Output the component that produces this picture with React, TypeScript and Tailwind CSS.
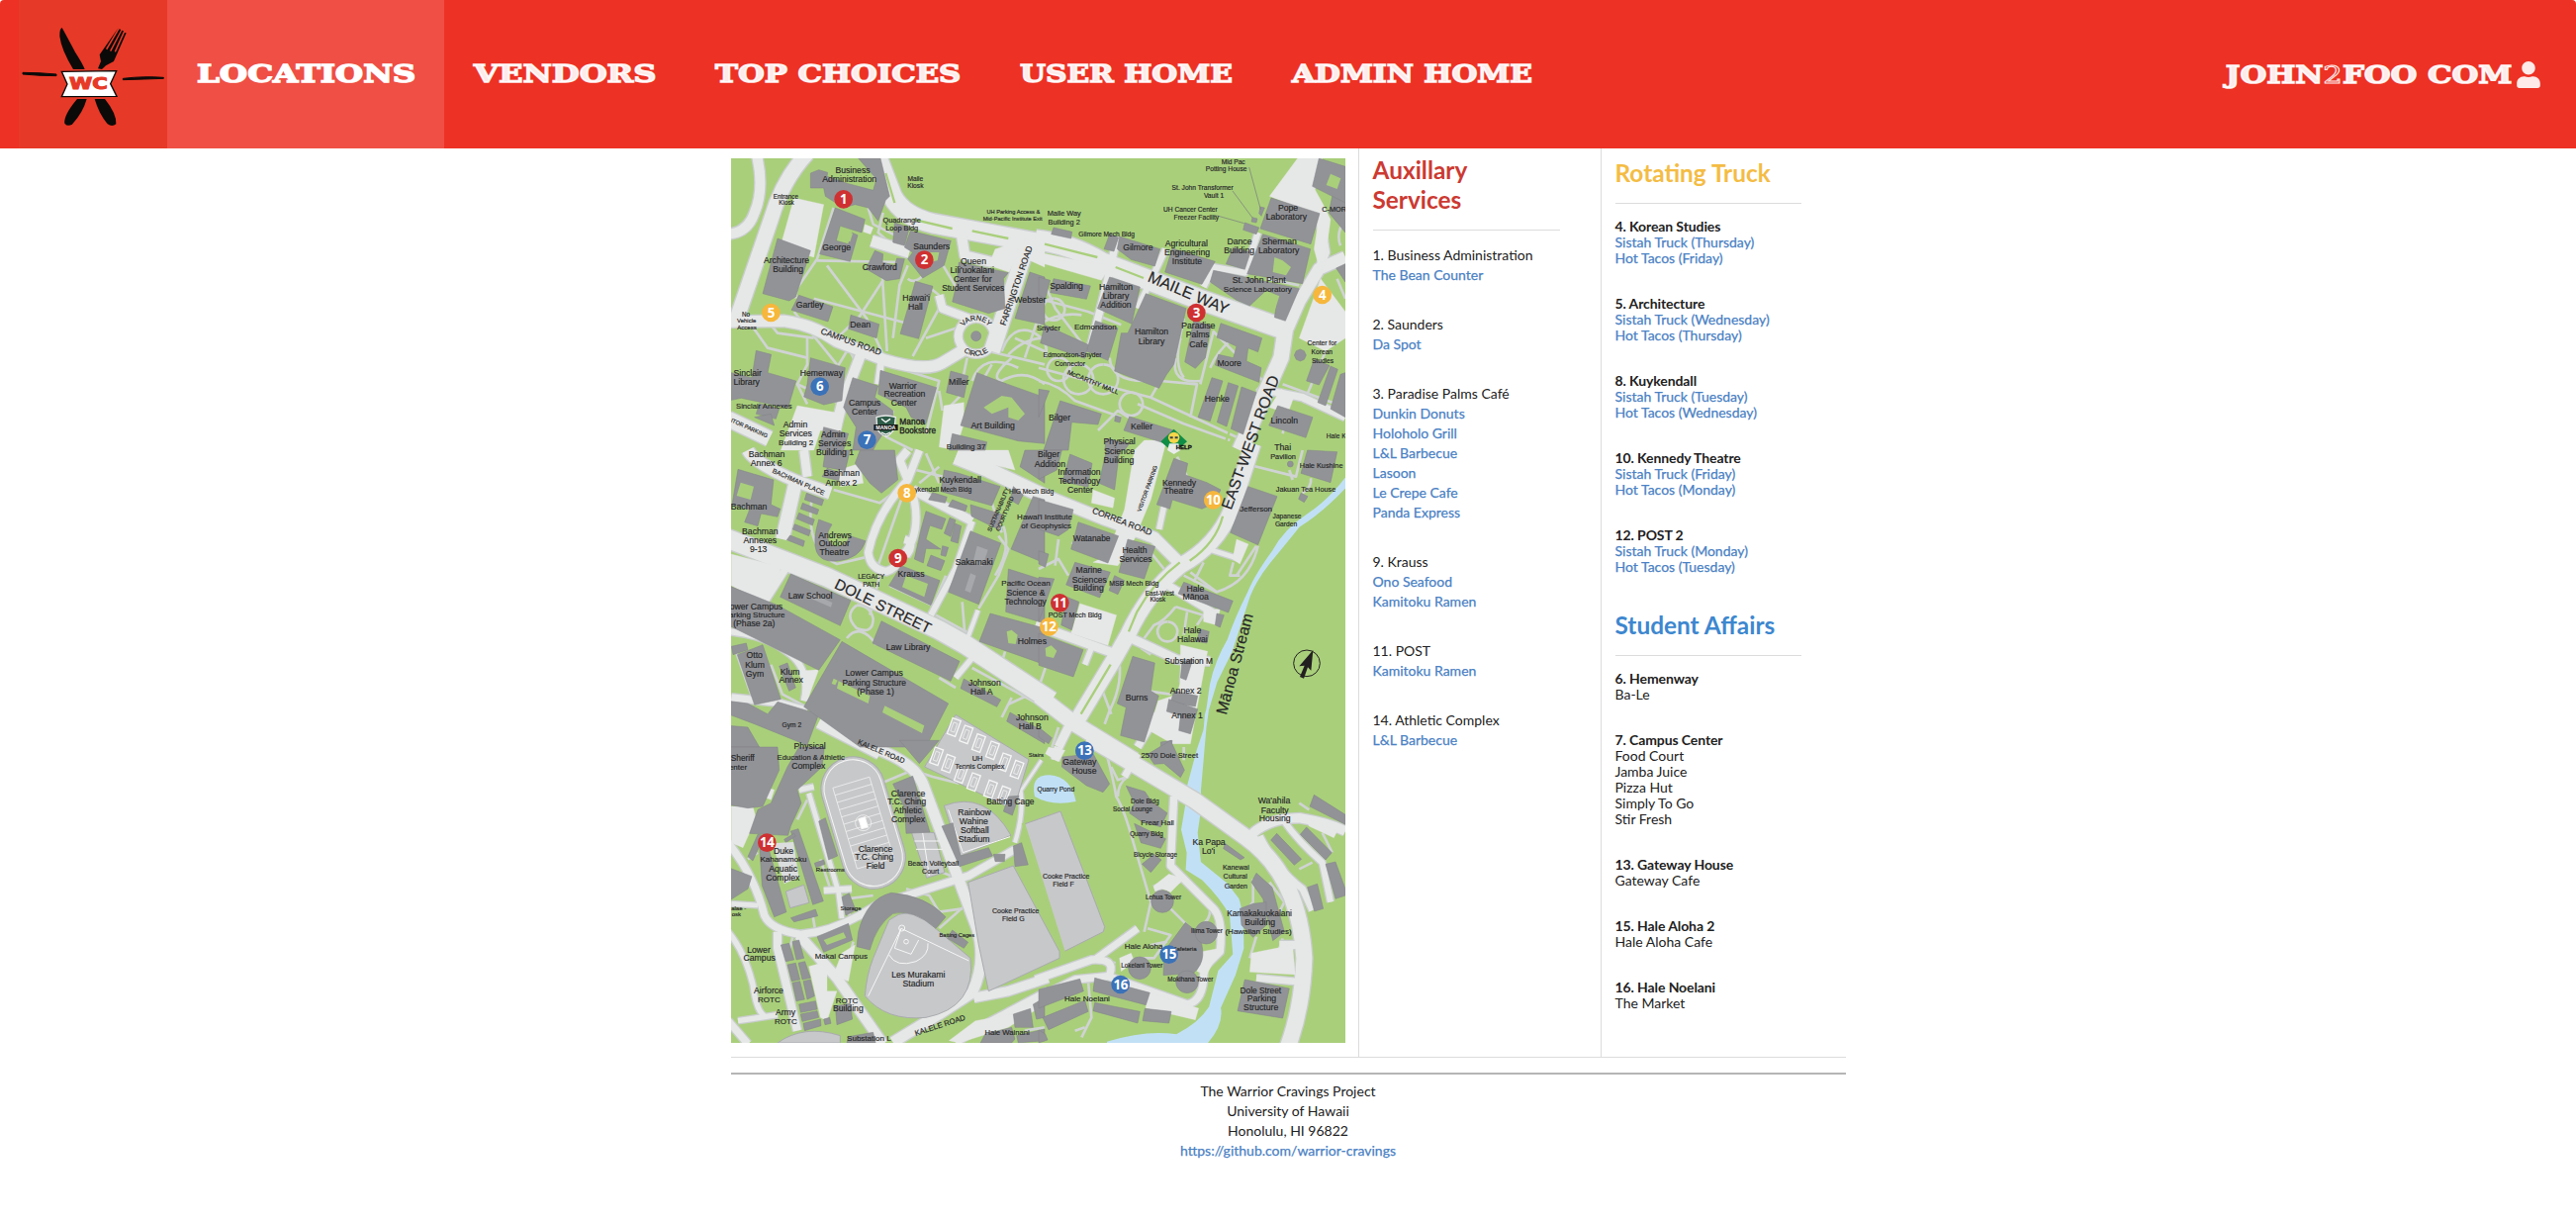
import { FaUser } from "react-icons/fa";

type Stroke = [width: number, d: string];
type Label = [x: number, y: number, text: string, size?: number, rotate?: number];

interface Tile {
  x: number;
  y: number;
  roads: Stroke[];
  lots: string[];
  paths: string[];
  buildings: string[];
  lawns?: string[];
  labels: Label[];
}

const tiles: Tile[] = [
  {
    x: 0,
    y: 0,
    roads: [
      [44, "M240 0Q165 80 130 200L20 520"],
      [30, "M88 10Q110 110 80 180Q60 240 0 245"],
      [58, "M448 0L498 130Q530 190 620 212L960 275"],
      [34, "M0 510L170 508Q260 520 330 570L470 625Q600 665 650 635L725 590"],
      [24, "M752 500a54 54 0 1 0 1 0"],
      [48, "M908 275L800 600"],
      [30, "M705 230L718 310L800 330"],
      [34, "M435 265L550 300"],
      [30, "M412 585L345 760L315 880"],
      [46, "M0 805L125 865"],
      [24, "M640 430L650 470L730 500"],
      [20, "M465 625L455 700"],
    ],
    lots: [
      "810,290 868,272 885,300 852,360 790,340",
      "200,135 290,155 260,315 158,285",
      "210,765 350,790 340,850 280,840 260,900 160,900",
      "655,765 715,755 715,820 690,900 640,890",
      "900,260 960,280 960,345 905,320",
      "415,215 440,225 432,245 410,238",
    ],
    paths: [
      "M270 325L530 330", "M195 430L270 320L320 165", "M300 340L420 500L470 610", "M470 385L398 495L330 560",
      "M468 375L482 600", "M260 440L560 520", "M545 340L520 400L500 560", "M615 410L640 430", "M600 360Q570 400 545 380",
      "M640 320L700 420", "M640 470L560 615", "M600 560L690 530", "M215 330L205 440", "M75 420L50 410",
      "M130 520L150 545L260 560", "M70 520L120 590L240 620", "M200 480L330 640", "M240 560L240 640L210 700L240 760",
      "M350 560L390 640", "M360 600L330 650", "M210 700L340 760", "M425 165L440 215L510 250", "M470 180L455 240L500 280",
      "M480 640L640 690L600 850", "M725 620L700 740L660 780", "M790 600L960 640", "M800 640L730 760", "M830 600Q860 520 920 540Q980 570 960 620",
      "M860 620Q790 680 830 690Q900 650 960 700", "M870 560L960 600", "M940 500L900 620", "M850 610Q900 560 960 560", "M740 690Q770 600 880 650",
      "M500 780L480 860L560 900", "M640 720L650 780",
    ],
    buildings: [
      "250,60 275,50 302,58 300,70 365,92 440,112 450,78 395,15 462,15 490,130 478,142 455,205 425,165 385,155 350,165 295,130 290,105 250,105",
      "325,165 415,200 405,240 340,220 328,265 365,275 375,240 393,248 370,328 278,305",
      "150,258 250,295 205,435 185,447 105,425",
      "215,430 318,465 303,510 192,475",
      "372,490 428,508 458,518 450,560 365,532",
      "445,295 470,305 468,330 505,340 512,318 535,320 520,380 480,386 418,350",
      "505,210 550,225 535,280 500,270",
      "553,235 676,265 655,340 590,378 545,320 560,300 535,285",
      "568,388 621,403 600,480 578,562 522,547 545,470",
      "700,330 850,362 835,380 840,470 790,485 680,450 692,400",
      "915,360 960,375 960,520 870,500",
      "85,598 131,610 120,665 206,690 182,772 40,742 10,748 10,665 72,680",
      "250,620 355,650 345,750 290,762 230,738 240,700",
      "95,758 155,775 145,805 85,790",
      "378,680 455,705 445,740 500,780 500,805 450,880 440,900 378,900 388,830 350,770",
      "462,658 632,710 600,820 555,800 540,770 455,730",
      "675,660 728,675 715,740 662,725",
      "755,665 820,690 960,740 960,880 880,872 705,825",
      "680,850 785,875 780,900 670,900",
      "290,830 365,850 350,900 275,900",
      "130,790 80,800 140,825",
    ],
    lawns: ["348,232 378,242 370,268 340,258", "610,300 640,300 635,325 612,330", "775,770 830,735 860,740 900,790 880,810 850,800 850,770 800,790"],
    labels: [
      [378, 60, "Business"], [368, 88, "Administration"], [568, 84, "Maile", 20], [568, 105, "Kiosk", 20],
      [175, 137, "Entrance", 19], [177, 157, "Kiosk", 19], [865, 182, "UH Parking Access &", 17], [863, 205, "Mid-Pacific Institute Exit", 17],
      [527, 210, "Quadrangle", 22], [527, 233, "Loop Bldg", 22], [329, 294, "George"], [617, 291, "Saunders"], [460, 354, "Crawford"],
      [177, 333, "Architecture"], [182, 359, "Building"], [744, 336, "Queen"], [740, 362, "Lili'uokalani"], [742, 389, "Center for"], [743, 417, "Student Services", 25],
      [248, 468, "Gartley"], [401, 527, "Dean"], [570, 448, "Hawai'i"], [568, 474, "Hall"], [916, 454, "Webster"], [54, 495, "No", 19], [56, 514, "Vehicle", 18], [57, 533, "Access", 18],
      [370, 579, "CAMPUS ROAD", 26, 20], [882, 404, "FARRINGTON ROAD", 26, -71],
      [59, 676, "Sinclair"], [56, 703, "Library"], [283, 676, "Hemenway"], [109, 774, "Sinclair Annexes", 23], [62, 838, "ITOR PARKING", 17, 24],
      [414, 765, "Campus"], [414, 791, "Center"], [530, 713, "Warrior"], [535, 739, "Recreation"], [533, 766, "Center"], [700, 703, "Miller"],
      [204, 832, "Admin"], [205, 858, "Services"], [206, 886, "Building 2", 24], [319, 860, "Admin"], [323, 888, "Services"], [324, 914, "Building 1"], [803, 834, "Art Building"], [722, 896, "Building 37", 24],
    ],
  },
  {
    x: 942,
    y: 0,
    roads: [
      [60, "M-10 262Q100 275 190 330L480 440L750 535"],
      [46, "M750 520L735 620L610 900"],
      [36, "M755 530L790 450L850 350L930 315"],
      [18, "M500 405L530 345L625 362L665 240"],
      [22, "M238 252L205 400L158 585"],
      [18, "M385 290L300 470"],
      [24, "M850 350L870 300L850 180"],
      [22, "M700 720L800 740L930 800"],
    ],
    lots: [
      "785,15 860,15 838,110 860,150 885,200 868,330 850,345 835,290 850,190 700,130",
      "855,380 930,480 930,560 870,600 790,560",
      "0,300 215,345 190,385 0,330",
      "735,715 775,735 755,790 700,770",
    ],
    paths: [
      "M0 440L150 480L250 520", "M20 400L50 470L150 600", "M45 440a33 33 0 1 0 1 0", "M0 520Q60 480 130 490", "M60 620a35 35 0 1 0 1 0",
      "M120 640a45 45 0 1 0 1 0", "M195 640a45 45 0 1 0 1 0", "M280 725a35 35 0 1 0 1 0", "M0 650L340 740L600 860", "M340 740L380 670L420 600L440 500",
      "M370 690L480 700L460 800", "M300 760L440 820L580 870", "M415 620Q400 700 490 690", "M430 560Q410 640 440 680", "M490 700L530 540L680 690",
      "M590 560Q540 600 520 650", "M720 560L730 640L660 720", "M740 700L930 770", "M870 600L810 740", "M905 380L930 440", "M0 690Q60 700 110 750L250 800",
      "M215 620Q220 690 320 690", "M380 400L500 420", "M620 470L760 520", "M790 400L690 380", "M180 840L240 780L320 830", "M760 750L740 850", "M870 480L830 560", "M910 500L870 600", "M930 200Q900 240 915 280",
    ],
    buildings: [
      "850,15 930,40 930,150 830,100", "890,130 930,150 930,240 880,180", "705,135 852,182 825,275 672,228", "672,162 685,165 675,190 668,182",
      "625,210 668,225 660,245 620,232", "648,194 663,198 660,210 645,207", "680,245 824,290 800,395 632,365", "590,285 642,300 625,352 568,335",
      "405,288 535,328 495,397 383,360", "245,252 368,290 352,342 280,322 238,290", "215,245 242,255 228,297 198,290", "45,225 101,238 98,258 38,245",
      "530,355 790,410 748,508 715,497 725,430 690,415 640,462 600,445 520,390", "45,380 157,402 145,442 35,422", "0,375 35,385 20,440 0,430",
      "215,375 307,405 282,517 178,470", "325,425 447,470 410,640 387,672 365,712 230,660 250,545 270,545", "172,508 240,530 210,628 145,600",
      "18,520 150,580 140,622 5,575", "470,508 522,522 505,620 475,652 443,632", "552,515 677,560 665,602 635,590 630,630 675,650 668,694 535,642 545,610 590,620 600,585 540,558",
      "525,680 558,690 520,812 483,800", "575,695 605,705 570,828 541,815", "615,708 660,725 620,852 583,835", "835,625 882,643 850,702 812,690",
      "725,765 831,800 810,862 698,825", "885,645 907,655 870,765 846,755", "915,670 930,665 930,800 885,775", "902,348 930,335 930,390",
      "0,715 32,720 0,800", "65,750 190,790 180,822 100,815 90,900 15,900", "275,798 410,840 385,880 258,840", "205,865 275,880 260,900 200,900",
      "233,795 250,800 246,816 230,812", "775,612 781,599 793,594 805,599 811,612 805,625 793,630 781,625",
    ],
    lawns: ["885,62 916,76 905,108 872,96", "700,425 730,432 715,480 680,470", "715,315 740,325 765,345 750,370 710,360"],
    labels: [
      [590, 33, "Mid Pac", 20], [569, 54, "Potting House", 20], [497, 111, "St. John Transformer", 20], [531, 134, "Vault 1", 20], [460, 178, "UH Cancer Center", 20], [478, 201, "Freezer Facility", 20],
      [756, 173, "Pope"], [751, 202, "Laboratory"], [896, 178, "C-MOR", 22], [77, 190, "Maile Way", 22], [77, 215, "Building 2", 22], [206, 251, "Gilmore Mech Bldg", 20], [301, 295, "Gilmore"],
      [448, 281, "Agricultural"], [450, 309, "Engineering"], [450, 335, "Institute"], [609, 275, "Dance"], [608, 302, "Building"], [730, 276, "Sherman"], [728, 304, "Laboratory"],
      [668, 393, "St. John Plant"], [664, 421, "Science Laboratory", 24], [84, 412, "Spalding"], [234, 414, "Hamilton"], [234, 442, "Library"], [234, 468, "Addition"],
      [448, 438, "MAILE WAY", 48, 23], [484, 531, "Paradise"], [482, 558, "Palms"], [484, 587, "Cafe"], [342, 549, "Hamilton"], [342, 578, "Library"], [30, 538, "Snyder", 23], [172, 535, "Edmondson", 24],
      [102, 618, "Edmondson-Snyder", 20], [95, 644, "Connector", 20], [162, 700, "McCARTHY MALL", 20, 22], [578, 645, "Moore"], [541, 754, "Henke"], [859, 583, "Center for", 20], [859, 610, "Korean", 20], [861, 637, "Studies", 20],
      [745, 818, "Lincoln"], [63, 809, "Bilger"], [312, 838, "Keller"], [245, 883, "Physical"], [902, 864, "Hale K", 20], [740, 899, "Thai"],
      [657, 882, "EAST-WEST ROAD", 48, -70],
    ],
  },
  {
    x: 0,
    y: 900,
    roads: [
      [56, "M-10 265L300 385L640 545L720 590L980 760"],
      [22, "M580 0L545 90Q450 190 425 310Q430 360 480 368Q510 360 530 320Q590 250 560 130"],
      [26, "M560 120L740 215"],
      [22, "M535 270Q570 280 540 320"],
      [18, "M740 215L690 360L615 500"],
      [12, "M758 485L715 600"],
      [36, "M60 0Q80 40 210 95L310 130"],
      [40, "M205 95L165 270"],
      [22, "M180 350L110 460"],
      [18, "M0 550Q120 560 190 620Q250 670 230 760"],
      [22, "M10 750L150 765L240 790"],
      [34, "M275 825L460 920"],
      [44, "M690 20L790 60L980 150"],
      [24, "M545 0L520 30L545 90"],
      [16, "M740 630L690 690"],
      [26, "M230 0L240 80"],
    ],
    lots: ["10,315 160,355 140,430 100,460 10,410", "700,0 850,0 870,60 700,20", "335,60 400,40 410,100 340,110", "215,670 275,665 240,760"],
    paths: [
      "M255 140Q230 300 330 345L415 325", "M320 120L460 160L540 100", "M525 150L455 350", "M600 10L640 100", "M570 60L650 80", "M640 50L580 100",
      "M490 410L620 470", "M660 380L610 500", "M710 460L720 580", "M630 500L740 560", "M820 260L850 300L820 380L760 480", "M835 230Q860 300 810 380",
      "M790 130L830 250", "M840 610L820 680", "M640 690L690 720", "M860 750L830 810", "M960 720L850 770", "M740 660L960 780", "M130 650L165 740L240 780", "M20 600L80 770", "M390 470Q350 500 390 540Q440 560 440 510Q430 470 390 470",
      "M360 570Q400 520 450 590", "M460 380L430 500",
    ],
    buildings: [
      "400,0 505,0 515,90 465,130 430,100 385,40", "295,0 370,0 355,62 288,50", "300,55 340,68 335,92 285,80",
      "30,58 138,90 130,165 158,178 150,202 100,192 90,230 50,218 65,180 12,165", "238,130 290,150 284,168 232,150", "226,160 275,180 270,195 220,178",
      "215,190 262,210 256,228 208,208", "202,224 250,243 245,260 196,240", "188,258 232,275 228,292 178,272",
      "525,350 642,395 615,470 488,410", "655,60 700,70 825,110 800,168 645,125", "620,128 664,142 658,160 608,150", "680,150 725,168 720,185 668,170",
      "735,165 832,195 820,240 738,200", "600,185 660,208 648,240 612,228 600,270 645,300 600,298 592,342 565,330 585,240",
      "615,318 657,335 645,365 603,350", "672,205 690,212 675,262 655,252", "688,222 707,230 697,282 675,275", "735,245 827,282 760,467 668,430",
      "925,140 960,150 960,342 858,300", "190,375 372,455 340,532 158,445", "0,410 150,470 340,575 275,667 0,530", "28,620 105,590 160,755 80,772",
      "155,655 180,645 205,720 185,730", "10,595 55,585 60,605 15,620", "0,760 60,768 120,800 150,763 275,800 240,895 80,830 0,800", "0,835 60,840 95,900 0,900",
      "465,518 702,640 675,700 438,585", "345,580 668,768 600,900 400,900 230,778", "850,360 960,395 960,525 842,490", "795,495 960,540 960,650 762,580",
      "715,693 827,757 815,778 705,722", "855,795 960,855 960,890 845,822", "900,0 960,0 960,100 885,50", "865,110 895,135 880,165 855,150",
      "650,290 668,295 660,322 645,318",
    ],
    lawns: [
      "38,98 78,110 68,150 26,138", "540,380 606,405 595,445 528,415", "335,700 430,745 425,768 330,722", "475,775 595,835 588,858 468,795",
      "845,550 860,545 878,560 872,588 850,585", "320,692 332,698 325,712 314,708",
    ],
    labels: [
      [117, 22, "Bachman"], [116, 48, "Annex 6"], [344, 78, "Bachman"], [343, 107, "Annex 2"], [211, 102, "BACHMAN PLACE", 20, 24], [63, 180, "Bachman"],
      [97, 256, "Bachman"], [97, 282, "Annexes"], [92, 308, "9-13"], [324, 266, "Andrews"], [322, 291, "Outdoor"], [322, 319, "Theatre"], [704, 99, "Kuykendall"], [652, 125, "ykendall Mech Bldg", 20],
      [920, 132, "HIG Mech Bldg", 20], [825, 182, "SUSTAINABILITY", 18, -67], [845, 195, "COURTYARD", 18, -67], [960, 209, "Hawai'i Institute", 24], [965, 236, "of Geophysics", 24], [746, 349, "Sakamaki"],
      [555, 384, "Krauss"], [434, 391, "LEGACY", 20], [434, 415, "PATH", 20], [903, 412, "Pacific Ocean", 24], [903, 440, "Science &"], [902, 468, "Technology", 25], [463, 487, "DOLE STREET", 46, 26],
      [249, 449, "Law School"], [78, 482, "Lower Campus"], [80, 508, "Parking Structure", 24], [79, 535, "(Phase 2a)"], [80, 631, "Otto"], [81, 659, "Klum"], [81, 686, "Gym"], [188, 681, "Klum"], [191, 706, "Annex"],
      [546, 606, "Law Library"], [443, 685, "Lower Campus"], [443, 713, "Parking Structure", 25], [447, 740, "(Phase 1)"], [922, 589, "Holmes"], [778, 713, "Johnson"], [769, 741, "Hall A"], [922, 818, "Johnson"], [916, 846, "Hall B"],
      [193, 839, "Gym 2", 20], [248, 907, "Physical"],
    ],
  },
  {
    x: 942,
    y: 900,
    roads: [
      [34, "M-10 125L200 210L350 265L425 340"],
      [46, "M650 -20L585 180Q540 290 430 350Q330 430 270 560L225 640L110 830"],
      [46, "M0 745L110 830L290 940"],
      [26, "M280 570L420 635L520 640"],
      [26, "M-10 530L240 620"],
      [22, "M385 405L540 500"],
      [14, "M515 300L610 330"],
      [16, "M160 600L140 650"],
      [16, "M380 170L365 240"],
      [12, "M440 650L435 700L470 740"],
      [26, "M90 840L60 900"],
      [22, "M300 900L360 800"],
    ],
    lots: [
      "320,-30 388,-30 340,150 290,270 240,350 165,340 205,320 260,180 290,0", "430,590 512,610 460,890 405,890 335,850 362,760 420,740 430,700",
      "125,465 236,500 210,592 98,555", "600,270 636,285 610,345 588,330", "500,490 550,480 540,530 500,520", "165,120 230,145 225,175 160,160",
    ],
    paths: [
      "M640 45L780 80L800 0", "M665 290Q640 400 540 430L440 380", "M500 340L470 400", "M460 370L540 430", "M590 340L580 380L610 380", "M660 290L600 380",
      "M415 475Q380 520 350 530L320 570", "M390 520a30 30 0 1 0 1 0", "M415 475L500 500L480 530", "M450 490L440 560", "M0 360L60 330L90 380",
      "M60 270L50 350", "M100 280L190 330", "M340 310L380 360", "M240 620Q260 700 215 790L200 830", "M220 800L190 720", "M330 730L400 740", "M340 620L310 600",
      "M20 660L0 720", "M430 650L470 620", "M60 840L40 900", "M770 90L760 60", "M825 85Q830 110 800 130", "M450 80L420 20",
    ],
    buildings: [
      "0,0 70,0 55,60 0,88", "95,12 162,40 150,112 72,95", "205,0 245,0 230,120 183,100", "410,25 452,40 445,75 510,98 552,120 530,162 495,178 405,150 398,178 358,165",
      "635,110 723,140 665,287 581,250", "815,0 905,5 885,98 795,70", "795,130 816,140 805,158 788,148", "120,218 242,260 210,342 98,300", "0,150 105,180 90,240 60,260 0,240",
      "0,305 30,315 20,355 0,345", "270,270 353,292 320,390 243,370", "110,340 217,370 185,447 83,408", "230,380 260,395 240,437 213,425", "0,385 47,390 0,520", "85,445 122,460 100,545 68,530",
      "0,555 135,605 105,687 0,652", "440,400 589,457 575,492 423,435", "540,495 562,500 550,537 535,530", "490,542 517,550 510,585 478,580", "285,625 352,645 340,730 364,745 320,885 248,865 265,780 238,768",
      "435,640 467,635 447,697 430,690", "410,730 482,745 475,777 400,765", "395,755 482,785 460,860 425,850 430,805 388,792", "0,840 40,872 30,890 0,870", "370,885 405,880 402,900 370,900",
    ],
    lawns: ["20,600 38,592 55,608 45,630 22,625"],
    labels: [
      [30, 22, "Bilger"], [34, 50, "Addition"], [245, 11, "Science"], [243, 39, "Building"], [123, 76, "Information"], [123, 103, "Technology", 25], [126, 130, "Center"],
      [335, 118, "VISITOR PARKING", 17, -70], [250, 224, "CORREA  ROAD", 26, 21], [426, 107, "Kennedy"], [424, 132, "Theatre"], [659, 187, "Jefferson", 24], [741, 26, "Pavilion", 22], [857, 55, "Hale Kushine", 22],
      [810, 125, "Jakuan Tea House", 22], [753, 207, "Japanese", 20], [750, 232, "Garden", 20], [161, 275, "Watanabe", 25], [291, 312, "Health"], [294, 339, "Services"],
      [152, 373, "Marine"], [154, 401, "Sciences"], [151, 427, "Building"], [289, 410, "MSB Mech Bldg", 21], [367, 440, "East-West", 19], [361, 460, "Kiosk", 19], [475, 429, "Hale"], [476, 454, "Mānoa"],
      [110, 508, "POST Mech Bldg", 21], [466, 555, "Hale"], [466, 582, "Halawai"], [455, 648, "Substation M", 25], [446, 738, "Annex 2"], [450, 812, "Annex 1"], [297, 759, "Burns"], [610, 652, "Mānoa Stream", 48, -75],
    ],
  },
  {
    x: 0,
    y: 1800,
    roads: [
      [32, "M420 -5Q560 40 590 110L755 550Q785 650 740 745L640 810L500 895"],
      [28, "M745 760L850 740L970 700"],
      [22, "M0 290Q80 390 110 510Q130 555 220 568Q310 560 400 510L450 480L730 390L870 310"],
      [30, "M215 570L330 700L470 900"],
      [24, "M150 560L150 610L210 860"],
      [16, "M0 560Q50 620 75 720Q85 800 110 815"],
      [16, "M30 830L150 812"],
      [22, "M0 830L60 900"],
      [16, "M215 130L260 120"],
      [14, "M245 140L335 440L345 520"],
      [18, "M290 435L375 430"],
      [12, "M885 125Q900 190 870 290"],
      [8, "M860 110L890 130L950 40"],
      [22, "M690 895L800 830L970 740"],
      [14, "M10 475L90 480"],
    ],
    lots: ["10,180 75,180 85,215 45,305 10,290", "245,665 300,650 300,740 330,740 300,830 280,820", "345,625 385,600 365,710 320,690", "670,890 750,830 860,810 960,745 960,780 850,850 700,897", "110,120 140,130 130,160 105,150"],
    paths: [
      "M210 220L240 160", "M60 340L90 320", "M200 560L180 640", "M280 340L310 430", "M440 120L560 70L620 90L700 110", "M540 430L610 450L640 500L710 490", "M640 550L730 470",
      "M640 0L600 60", "M650 380L700 400", "M370 520L360 460L440 450", "M860 830L920 810", "M900 860L960 850", "M255 500L265 560", "M380 590L350 700",
    ],
    buildings: [
      "0,0 150,0 155,70 105,180 60,185 0,175", "215,0 292,0 285,60 210,130 222,170 190,240 182,268 65,262 90,190 130,170 180,60", "60,332 90,265 110,268 75,345",
      "95,300 118,290 177,500 140,515 103,420", "190,255 213,248 289,467 257,478", "170,280 200,262 205,270 175,290", "190,518 265,492 272,512 200,530", "0,365 72,392 60,430 0,468", "275,225 295,215 332,330 305,342", "345,455 367,443 387,495 357,510", "262,352 290,342 294,355 266,365",
      "500,112 560,88 612,258 540,262 535,185", "648,240 682,230 705,330 790,305 802,330 702,362", "850,150 882,148 862,207 835,195", "865,300 890,290 910,357 870,362", "805,325 840,325 838,347 810,347",
      "270,575 365,535 377,585 290,622", "160,600 185,595 200,645 175,650", "195,590 215,585 230,640 207,645", "180,660 205,655 218,705 193,710", "213,655 233,650 250,700 225,705", "195,715 218,710 232,765 207,770", "228,710 250,705 262,755 240,765",
      "215,780 265,770 270,795 220,805", "220,810 270,800 275,820 225,832", "228,838 280,825 282,845 232,860", "325,785 370,778 377,825 330,842", "680,555 728,592 715,610 665,580", "365,878 440,865 447,897 360,897", "865,810 917,793 925,850 870,850",
      "765,897 780,870 860,850 870,885 860,897", "875,875 960,855 960,890 880,897", "925,780 960,760 960,820 935,825", "290,825 308,820 312,838 294,842", "640,-20 520,-20 580,50",
    ],
    lawns: ["290,585 350,562 358,578 300,600"],
    labels: [
      [44, 43, "Sheriff", 25], [30, 70, "enter", 24], [251, 38, "Education & Athletic", 23], [244, 67, "Complex"], [462, 20, "KALELE ROAD", 22, 23], [934, 29, "Stairs", 18], [756, 43, "UH", 22], [763, 66, "Tennis Complex", 21],
      [546, 149, "Clarence"], [542, 175, "T.C. Ching", 25], [545, 202, "Athletic"], [546, 229, "Complex"], [856, 174, "Batting Cage", 25], [747, 207, "Rainbow"], [745, 234, "Wahine"], [748, 261, "Softball"], [746, 288, "Stadium"],
      [168, 324, "Duke"], [168, 349, "Kahanamoku", 24], [167, 377, "Aquatic"], [166, 405, "Complex"], [447, 317, "Clarence"], [443, 342, "T.C. Ching", 25], [447, 370, "Field"], [310, 377, "Restrooms", 18], [622, 360, "Beach Volleyball", 21], [614, 384, "Court", 21],
      [32, 496, "alae -", 18], [25, 514, "osk", 18], [372, 496, "Storage", 18], [872, 503, "Cooke Practice", 21], [865, 527, "Field G", 21], [694, 576, "Batting Cages", 17], [93, 623, "Lower"], [95, 649, "Campus"], [343, 641, "Makai Campus", 24],
      [577, 699, "Les Murakami"], [577, 725, "Stadium"], [123, 748, "Airforce"], [124, 774, "ROTC", 24], [174, 814, "Army"], [175, 841, "ROTC", 24], [360, 776, "ROTC", 24], [364, 802, "Building"], [645, 851, "KALELE ROAD", 23, -18], [427, 891, "Substation L", 24], [846, 874, "Hale Wainani", 23],
    ],
  },
  {
    x: 942,
    y: 1800,
    roads: [
      [48, "M150 -30L470 160L630 275Q790 390 805 640Q800 790 755 910"],
      [28, "M645 265Q700 215 790 215Q880 230 930 255"],
      [20, "M670 270Q720 370 800 430L830 495"],
      [18, "M740 220Q790 290 860 350L885 470"],
      [22, "M-10 705L160 645Q235 640 215 690"],
      [22, "M-10 765L110 705L210 695L450 780Q505 770 500 670L550 620Q560 520 530 490L400 360L410 150"],
      [20, "M170 645L300 550"],
      [20, "M660 700L795 712"],
      [16, "M350 430L430 400"],
      [24, "M800 600L730 600"],
      [20, "M300 20L260 90"],
      [24, "M60 0L50 40"],
    ],
    lots: ["645,625 770,600 778,690 640,682", "325,742 485,792 475,827 325,792", "350,420 395,385 440,400 400,440", "495,620 550,610 510,690 480,680", "245,640 280,625 290,650 250,680", "810,215 905,255 895,275 820,240", "80,10 30,0 20,20 60,45"],
    paths: [
      "M200 0Q225 90 235 150Q260 190 290 300L340 470L320 560", "M270 90Q240 110 240 150", "M400 490L470 560", "M520 490Q520 530 490 540", "M330 550L400 570L350 640L300 640", "M340 600L390 590", "M650 400L650 470L610 520",
      "M700 410L745 470L720 520", "M220 60L240 100L270 90", "M740 580L730 610", "M860 260L890 320", "M150 710L160 820L130 880", "M110 860L140 850", "M230 650L215 700", "M790 170L820 190", "M440 0L440 40", "M830 350L790 370", "M660 575L640 640",
    ],
    buildings: [
      "72,30 165,20 215,112 195,137 145,117 70,60", "330,22 400,-20 442,70 430,92 380,50 350,52", "265,118 322,135 342,165 390,200 370,242 310,225 275,200 290,170", "290,232 385,278 370,307 310,290", "313,355 350,325 372,342 340,380",
      "0,735 125,703 136,740 0,792", "170,700 337,745 325,782 165,740", "12,820 140,768 150,802 30,857", "170,775 307,802 300,837 165,800", "322,793 402,802 395,837 315,830", "0,858 20,870 27,888 0,897", "565,292 624,335 612,342 560,308",
      "660,382 708,425 745,560 710,587 680,460 645,410", "610,490 650,475 690,470 690,540 650,577 615,540", "625,705 760,732 740,822 603,800", "835,145 930,205 930,235 822,180", "812,243 889,320 870,342 793,265", "722,262 797,340 775,358 704,282",
      "870,355 900,348 930,430 930,450 900,460", "815,425 845,415 863,490 836,498",
    ],
    labels: [
      [397, 34, "2570 Dole Street", 23], [124, 54, "Gateway"], [138, 81, "House"], [52, 136, "Quarry Pond", 20], [322, 170, "Dole Bldg", 20], [285, 195, "Social Lounge", 19], [360, 237, "Frear Hall", 23], [327, 270, "Quarry Bldg", 19], [354, 333, "Bicycle Storage", 19],
      [714, 172, "Wa'ahila"], [716, 200, "Faculty"], [716, 226, "Housing"], [516, 298, "Ka Papa"], [515, 324, "Lo'i"], [598, 372, "Kanewai", 21], [596, 400, "Cultural", 21], [598, 428, "Garden", 21], [83, 400, "Cooke Practice", 21], [75, 424, "Field F", 21],
      [378, 463, "Lehua Tower", 19], [510, 564, "Ilima Tower", 19], [669, 513, "Kamakakuokalani", 25], [671, 541, "Building"], [666, 568, "(Hawaiian Studies)", 24], [318, 612, "Hale Aloha", 24], [442, 617, "Cafeteria", 18], [313, 669, "Lokelani Tower", 19], [460, 711, "Mokihana Tower", 19],
      [673, 746, "Dole Street", 25], [676, 772, "Parking"], [674, 799, "Structure"], [147, 771, "Hale Noelani", 24],
    ],
  },
];

const RED = "#cf3132";
const YELLOW = "#f6b73c";
const BLUE = "#3b72b8";

const pins: [number, number, number, string][] = [
  [1, 350, 139, RED], [2, 595, 323, RED], [3, 1420, 483, RED], [4, 1802, 429, YELLOW], [5, 130, 483, YELLOW], [6, 278, 707, BLUE],
  [7, 421, 869, BLUE], [8, 542, 1030, YELLOW], [9, 515, 1227, RED], [10, 1471, 1051, YELLOW], [11, 1006, 1363, RED], [12, 973, 1435, YELLOW],
  [13, 1081, 1811, BLUE], [14, 118, 2090, RED], [15, 1337, 2429, BLUE], [16, 1190, 2520, BLUE],
];

const courts = [
  [685, 1740], [722, 1762], [760, 1788], [802, 1810], [632, 1828], [668, 1850], [706, 1882], [745, 1906],
  [796, 1928], [836, 1946], [838, 1846], [876, 1868],
];

const at = (t: Tile) => `translate(${t.x} ${t.y})`;

function CampusMap() {
  return (
    <svg viewBox="9 15 1863 2682" preserveAspectRatio="none" className="block h-[894px] w-[621px]" fontFamily="'Liberation Sans', Arial, sans-serif">
      <rect x="0" y="0" width="1900" height="2710" fill="#a9cf7b" />

      <g fill="none" stroke="#d0d3d4" strokeWidth="8" strokeLinejoin="round">
        {tiles.map((t, i) => (
          <g key={i} transform={at(t)}>
            {t.paths.map((d, j) => <path key={j} d={d} />)}
          </g>
        ))}
      </g>

      {/* Mānoa Stream and the quarry pond */}
      <path
        d="M1890 965Q1830 1050 1760 1095Q1690 1140 1655 1205Q1600 1280 1580 1330Q1540 1410 1518 1475Q1480 1540 1465 1610L1445 1750L1425 1810L1393 1930L1390 1980L1378 2050L1395 2120L1392 2170L1440 2200Q1500 2260 1525 2310L1535 2430L1490 2480L1462 2590Q1430 2640 1360 2675Q1270 2660 1150 2697L1450 2697Q1500 2640 1490 2590L1535 2490L1560 2410Q1560 2300 1545 2260L1510 2215L1430 2150L1420 2060L1430 1990L1430 1930L1450 1700L1480 1600L1525 1510L1580 1340Q1600 1290 1640 1240Q1690 1180 1730 1130Q1810 1080 1890 990Z"
        fill="#c1e0f6" stroke="#c1e0f6" strokeWidth="8"
      />
      <path d="M930 1950Q915 1885 975 1885Q1040 1890 1055 1965Q980 1980 930 1950Z" fill="#c1e0f6" />

      <g fill="none" stroke="#c9cdcd" strokeLinejoin="round">
        {tiles.map((t, i) => (
          <g key={i} transform={at(t)}>
            {t.roads.map(([w, d], j) => <path key={j} d={d} strokeWidth={w + 8} />)}
          </g>
        ))}
      </g>
      <g fill="none" stroke="#e6e7e7" strokeLinejoin="round">
        {tiles.map((t, i) => (
          <g key={i} transform={at(t)}>
            {t.roads.map(([w, d], j) => <path key={j} d={d} strokeWidth={w} />)}
            {t.lots.map((p, j) => <polygon key={j} points={p} fill="#e6e7e7" />)}
          </g>
        ))}
      </g>

      {/* Planted medians */}
      <g fill="none" stroke="#a9cf7b" strokeWidth="7">
        <path d="M478 60L505 150M560 200L680 228M740 235L850 258M960 275L1120 315M1175 345L1260 378" />
        <path d="M1620 560L1500 900M1500 1100Q1480 1180 1400 1235M1370 1240Q1290 1300 1240 1390L1215 1450M1160 1550L1070 1700" />
      </g>

      {/* Playing fields */}
      <g fill="#c7c8ca" stroke="#a9abae" strokeWidth="3">
        <polygon points="728,2210 865,2160 1005,2420 1005,2440 790,2540 760,2400" />
        <polygon points="895,2035 1008,1995 1142,2345 1138,2360 1015,2422" />
        <polygon points="690,1702 912,1838 866,1990 596,1860" />
        <path d="M488 2325Q545 2280 600 2325L735 2440Q752 2590 600 2620Q480 2632 415 2555Q420 2490 440 2440Z" />
        <path d="M655 1978Q780 1930 858 2068L705 2130Z" />
        <polygon points="555,2055 625,2060 657,2180 602,2197" />
        <rect x="-97" y="-205" width="194" height="410" rx="97" transform="translate(410 2030) rotate(-16.7)" />
        <polygon points="175,2238 230,2218 246,2272 188,2288" />
        <path d="M150 2697Q230 2640 340 2675L340 2697Z" />
      </g>
      <path d="M895 2030L1020 2430" stroke="#a9cf7b" strokeWidth="10" />
      <g fill="none" stroke="#f6f6f6" strokeWidth="3">
        <g transform="translate(410 2030) rotate(-16.7)">
          <rect x="-88" y="-196" width="176" height="392" rx="88" />
          <rect x="-58" y="-128" width="116" height="256" strokeWidth="2" />
          {[-105, -82, -59, -36, -13, 10, 33, 56, 79, 102].map((y) => <path key={y} d={`M-58 ${y}H58`} strokeWidth="2" />)}
          <circle r="24" strokeWidth="2" />
          <rect x="-10" y="-16" width="20" height="32" fill="#fff" />
        </g>
        <path d="M425 2555L525 2350L730 2448M525 2350L505 2410L555 2428L578 2385M488 2430Q510 2470 570 2450Q610 2430 606 2395" />
        <circle cx="527" cy="2349" r="9" />
        <circle cx="540" cy="2390" r="7" />
        <path d="M668 1990L712 2120L855 2072M565 2085L640 2085M570 2110L650 2110M590 2060L610 2190" />
        {courts.map(([x, y], i) => (
          <g key={i} transform={`translate(${x} ${y}) rotate(20)`}>
            <rect x="-13" y="-25" width="26" height="50" strokeWidth="4" />
            <rect x="-6" y="-14" width="12" height="28" strokeWidth="2" />
          </g>
        ))}
      </g>

      <g fill="#929397" stroke="#808286" strokeWidth="1.5">
        {tiles.map((t, i) => (
          <g key={i} transform={at(t)}>
            {t.buildings.map((p, j) => <polygon key={j} points={p} />)}
          </g>
        ))}
        <path d="M275 1110Q235 1245 330 1236Q400 1230 417 1175L370 1160Q350 1200 320 1190Q285 1170 315 1125Z" />
        <path d="M395 2360Q420 2260 495 2242Q600 2250 660 2315L630 2350Q560 2290 500 2305Q450 2340 430 2415L390 2405Z" />
        <path d="M1387 2332L1422 2360Q1462 2440 1412 2485L1320 2492L1322 2420Z" />
        <circle cx="1317" cy="2268" r="34" />
        <circle cx="1450" cy="2363" r="34" />
        <circle cx="1248" cy="2470" r="34" />
        <circle cx="1392" cy="2512" r="34" />
        <circle cx="752" cy="554" r="15" />
        <circle cx="1705" cy="942" r="9" />
      </g>
      <g fill="#a9cf7b">
        {tiles.map((t, i) => (
          <g key={i} transform={at(t)}>
            {t.lawns?.map((p, j) => <polygon key={j} points={p} />)}
          </g>
        ))}
      </g>
      <g fill="#a6a8ab">
        <polygon points="755,1190 788,1202 772,1252 743,1240" />
        <polygon points="735,1273 752,1280 735,1332 718,1325" />
        <polygon points="250,1332 316,1362 312,1376 240,1345" />
        <polygon points="135,2092 198,2088 215,2195 170,2215" fill="#dcdddf" />
      </g>
      <path d="M1580 42L1615 170M1530 114L1590 195M1480 188L1565 212" fill="none" stroke="#77787b" strokeWidth="2" />

      <defs>
        <path id="varney-top" d="M704 554A48 48 0 0 1 800 554" />
        <path id="varney-bottom" d="M692 554A60 60 0 0 0 812 554" />
      </defs>
      <g fill="#262728" textAnchor="middle" stroke="#262728" strokeWidth="0.5">
        {tiles.map((t, i) => (
          <g key={i} transform={at(t)}>
            {t.labels.map(([x, y, text, size = 26, rotate = 0], j) => (
              <text key={j} transform={`translate(${x} ${y}) rotate(${rotate})`} fontSize={size}>{text}</text>
            ))}
          </g>
        ))}
        <text fontSize="22"><textPath href="#varney-top" startOffset="50%">VARNEY</textPath></text>
        <text fontSize="22"><textPath href="#varney-bottom" startOffset="50%">CIRCLE</textPath></text>
      </g>

      {/* Bookstore crest */}
      <g>
        <path d="M450 800Q478 790 508 800L504 835Q495 852 478 858Q460 852 452 835Z" fill="#2d5c48" stroke="#e8e8e8" strokeWidth="4" />
        <path d="M465 805L478 815L492 805M465 846L478 852L492 846" stroke="#fff" strokeWidth="4" fill="none" />
        <rect x="442" y="822" width="73" height="18" fill="#161a18" />
        <text x="478" y="837" textAnchor="middle" fontSize="16" fontWeight="bold" fill="#fff">MANOA</text>
        <text x="520" y="822" fontSize="27" fill="#1b1c1c" textLength="77" lengthAdjust="spacingAndGlyphs" stroke="#1b1c1c" strokeWidth="1">Manoa</text>
        <text x="520" y="849" fontSize="27" fill="#1b1c1c" textLength="110" lengthAdjust="spacingAndGlyphs" stroke="#1b1c1c" strokeWidth="1">Bookstore</text>
      </g>

      {/* Help desk marker */}
      <g transform="translate(1352 872)">
        <path d="M0 -36L40 2L0 36L-40 2Z" fill="#0f8d46" />
        <circle cy="-10" r="17" fill="#f5d54b" />
        <path d="M-20 28L-14 8L14 8L20 28L0 40Z" fill="#e9ecec" />
        <path d="M-12 -10H-3M3 -10H12" stroke="#33414a" strokeWidth="6" />
        <text x="6" y="25" fontSize="18" fontWeight="bold" fill="#111" stroke="#111" strokeWidth="1">HELP</text>
      </g>

      {/* North arrow */}
      <circle cx="1755" cy="1546" r="40" fill="none" stroke="#231f20" strokeWidth="3" />
      <path d="M1774 1506L1768 1568L1758 1558L1746 1592L1734 1587L1748 1553L1732 1555Z" fill="#231f20" />

      <g fontFamily="'Open Sans', sans-serif" fontWeight="bold" fontSize="40" fill="#fff" textAnchor="middle">
        {pins.map(([n, x, y, color]) => (
          <g key={n}>
            <circle cx={x} cy={y} r="28" fill={color} />
            <text x={x} y={y + 14} letterSpacing="-1">{n}</text>
          </g>
        ))}
      </g>
    </svg>
  );
}

function Logo() {
  return (
    <svg viewBox="57 0 450 450" className="h-[150px] w-[150px] bg-[#e73927]">
      <g fill="#0b0a09" strokeLinejoin="round">
        <path d="M188 84Q180 88 181 110Q186 150 222 210L257 210Q252 195 228 158Q195 96 188 84Z" />
        <path d="M359 84L302 166L306 186L297 208L309 210L321 199L345 186L383 100L378 99L351 158L347 156L375 94L370 92L337 156L333 154L367 90L362 88L325 151L321 148Z" />
        <path d="M234 300L263 300Q252 340 220 376Q205 386 196 374Q192 350 234 300Z" />
        <path d="M287 300L318 300Q354 345 352 376Q340 386 326 376Q300 345 287 300Z" />
        <path d="M69 220Q120 220 171 225L171 230Q120 230 69 225Z" stroke="#0b0a09" strokeWidth="3" />
        <path d="M373 238Q440 230 496 235L496 238Q440 240 373 242Z" stroke="#0b0a09" strokeWidth="3" />
      </g>
      <path d="M187 217L353 215L335 254L354 292L187 293L204 255Z" fill="#fff" stroke="#0b0a09" strokeWidth="4" />
      <text x="268" y="271" textAnchor="middle" textLength="116" lengthAdjust="spacingAndGlyphs" fontFamily="'DejaVu Sans', sans-serif" fontWeight="bold" fontSize="45" fill="#e73927" stroke="#e73927" strokeWidth="3">WC</text>
    </svg>
  );
}

const display = "font-['DejaVu_Serif','Liberation_Serif',serif] text-[25px] leading-none font-bold whitespace-nowrap [-webkit-text-stroke:1.4px_currentColor]";

const nav = [
  { label: "LOCATIONS", item: "w-[280px] bg-white/15 text-white", scale: "scale-x-[1.3]" },
  { label: "VENDORS", item: "w-[244px] text-white/90", scale: "scale-x-[1.285]" },
  { label: "TOP CHOICES", item: "w-[308px] text-white/90", scale: "scale-x-[1.23]" },
  { label: "USER HOME", item: "w-[275px] text-white/90", scale: "scale-x-[1.19]" },
  { label: "ADMIN HOME", item: "w-[304px] text-white/90", scale: "scale-x-[1.19]" },
];

interface Group {
  title: string;
  items: string[];
}

const auxiliary: Group[] = [
  { title: "1. Business Administration", items: ["The Bean Counter"] },
  { title: "2. Saunders", items: ["Da Spot"] },
  { title: "3. Paradise Palms Café", items: ["Dunkin Donuts", "Holoholo Grill", "L&L Barbecue", "Lasoon", "Le Crepe Cafe", "Panda Express"] },
  { title: "9. Krauss", items: ["Ono Seafood", "Kamitoku Ramen"] },
  { title: "11. POST", items: ["Kamitoku Ramen"] },
  { title: "14. Athletic Complex", items: ["L&L Barbecue"] },
];

const trucks: Group[] = [
  { title: "4. Korean Studies", items: ["Sistah Truck (Thursday)", "Hot Tacos (Friday)"] },
  { title: "5. Architecture", items: ["Sistah Truck (Wednesday)", "Hot Tacos (Thursday)"] },
  { title: "8. Kuykendall", items: ["Sistah Truck (Tuesday)", "Hot Tacos (Wednesday)"] },
  { title: "10. Kennedy Theatre", items: ["Sistah Truck (Friday)", "Hot Tacos (Monday)"] },
  { title: "12. POST 2", items: ["Sistah Truck (Monday)", "Hot Tacos (Tuesday)"] },
];

const student: Group[] = [
  { title: "6. Hemenway", items: ["Ba-Le"] },
  { title: "7. Campus Center", items: ["Food Court", "Jamba Juice", "Pizza Hut", "Simply To Go", "Stir Fresh"] },
  { title: "13. Gateway House", items: ["Gateway Cafe"] },
  { title: "15. Hale Aloha 2", items: ["Hale Aloha Cafe"] },
  { title: "16. Hale Noelani", items: ["The Market"] },
];

const linkText = "text-[#4a81c4] [-webkit-text-stroke:0.25px_currentColor]";

function CompactList({ groups, itemClass }: { groups: Group[]; itemClass: string }) {
  return (
    <ul className="flex flex-col gap-[30px] leading-4">
      {groups.map((g) => (
        <li key={g.title}>
          <div className="font-bold tracking-[-0.1px]">{g.title}</div>
          {g.items.map((i) => <div key={i} className={itemClass}>{i}</div>)}
        </li>
      ))}
    </ul>
  );
}

export default function App() {
  return (
    <div className="min-h-[1234px] bg-white font-['Lato',sans-serif] text-sm text-[#212121]">
      <header className="flex h-[150px] items-stretch rounded-t bg-[#ed3124] pl-[19px]">
        <Logo />
        <nav className="flex">
          {nav.map((n) => (
            <a key={n.label} className={`flex items-center pb-[2px] pl-[30px] ${display} ${n.item}`}>
              <span className={`inline-block origin-left ${n.scale}`}>{n.label}</span>
            </a>
          ))}
        </nav>
        <div className={`ml-auto flex items-center gap-1 pr-[35px] text-white/90 ${display}`}>
          <span className="inline-block origin-right scale-x-[1.23]">
            JOHN<span className="font-normal text-[#ed3124] [-webkit-text-stroke:1px_#fde8e6]">2</span>FOO COM
          </span>
          <FaUser className="h-[27px] w-[26px]" />
        </div>
      </header>

      <main className="mx-auto flex h-[919px] w-[1127px] border-b border-[#dcdcdc]">
        <div className="w-[634px] pt-[10px]">
          <CampusMap />
        </div>

        <section className="w-[245px] border-l border-[#dcdcdc] pt-[7px] pl-[14px]">
          <h2 className="text-[24.4px] leading-[30px] font-bold text-[#cc3a32]">Auxillary<br />Services</h2>
          <hr className="mt-[15px] w-[189px] border-[#dcdcdc]" />
          <ul className="mt-[15px] flex flex-col gap-[30px] leading-5">
            {auxiliary.map((g) => (
              <li key={g.title}>
                <div>{g.title}</div>
                {g.items.map((i) => <div key={i} className={linkText}>{i}</div>)}
              </li>
            ))}
          </ul>
        </section>

        <section className="flex-1 border-l border-[#dcdcdc] pt-[10px] pl-[14px]">
          <h2 className="text-[24.4px] leading-[30px] font-bold text-[#f4bc44]">Rotating Truck</h2>
          <hr className="mt-[15px] mb-[15px] w-[188px] border-[#dcdcdc]" />
          <CompactList groups={trucks} itemClass={linkText} />
          <h2 className="mt-[36px] text-[24.4px] leading-[30px] font-bold text-[#3d87cf]">Student Affairs</h2>
          <hr className="mt-[15px] mb-[15px] w-[188px] border-[#dcdcdc]" />
          <CompactList groups={student} itemClass="" />
        </section>
      </main>

      <footer className="mx-auto mt-[15px] w-[1127px] border-t-2 border-[#b5b5b5] pt-[7px] text-center leading-5">
        <div>The Warrior Cravings Project</div>
        <div>University of Hawaii</div>
        <div>Honolulu, HI 96822</div>
        <a className={linkText}>https://github.com/warrior-cravings</a>
      </footer>
    </div>
  );
}
